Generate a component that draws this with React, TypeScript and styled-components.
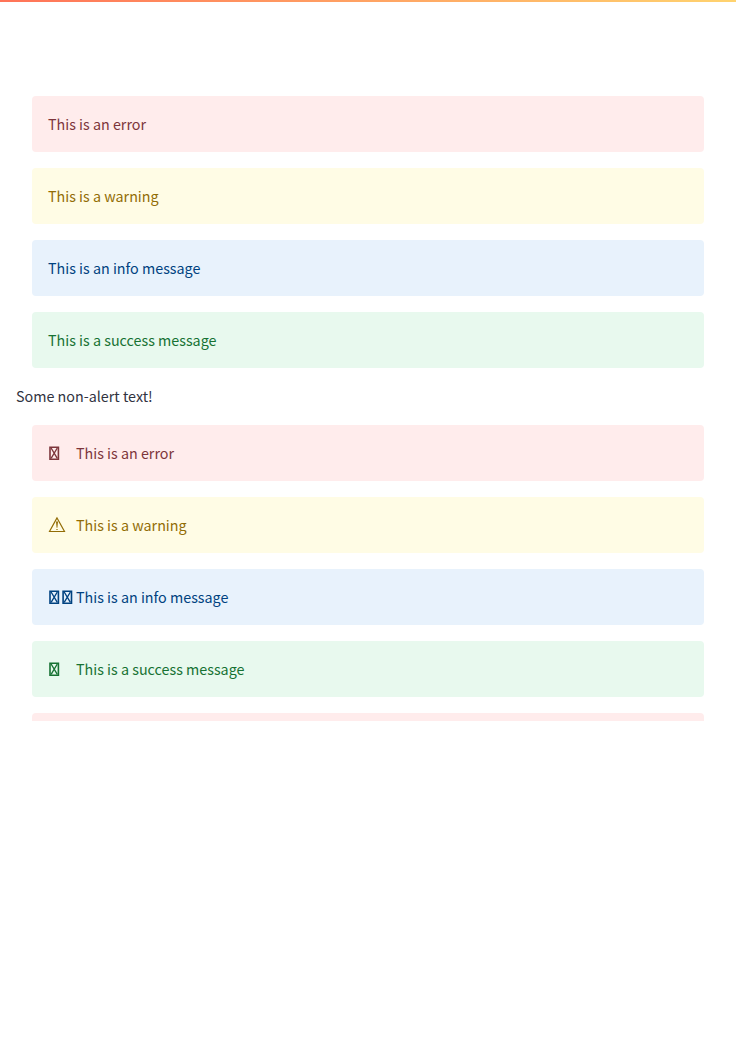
import React from "react";
import styled, { createGlobalStyle } from "styled-components";

const tones = {
  error: { bg: "#ffecec", fg: "#7d353b" },
  warning: { bg: "#fffce5", fg: "#926c05" },
  info: { bg: "#e8f2fc", fg: "#004280" },
  success: { bg: "#e8f9ee", fg: "#177233" },
};
type Tone = keyof typeof tones;

const GlobalStyle = createGlobalStyle`
  * { box-sizing: border-box; }
  body { margin: 0; background: #fff; color: #31333f;
    font-family: "Noto Sans CJK SC", "Noto Sans", sans-serif; font-size: 14.32px; line-height: 24px; }
`;
const Decoration = styled.div`
  height: 2px;
  background: linear-gradient(90deg, #ff7358, #ffd36f);
`;
const Viewport = styled.main`
  height: 719px;
  overflow: hidden;
  padding: 94px 16px 0;
`;
const Stack = styled.section`
  display: flex;
  flex-direction: column;
  gap: 16px;
  padding: 0 16px;
`;
const AlertBox = styled.div<{ $tone: Tone }>`
  display: flex;
  align-items: center;
  height: 56px;
  padding: 0 16px;
  border-radius: 4px;
  background: ${(p) => tones[p.$tone].bg};
  color: ${(p) => tones[p.$tone].fg};
`;
const Icon = styled.svg`
  flex: none;
  width: 28px;
  height: 24px;
  fill: none;
  stroke: currentColor;
`;
const Text = styled.p`
  margin: 16px 0 17px;
`;

const MissingGlyph = ({ x }: { x: number }) => (
  <g transform={`translate(${x} 0)`}>
    <path d="M1.7 6.2h8.4v12H1.7z" strokeWidth="1.6" />
    <path d="M2.8 7l6.2 10.4M9 7L2.8 17.4" strokeWidth="1.35" />
  </g>
);

const AlertIcon = ({ tone }: { tone: Tone }) => (
  <Icon viewBox="0 0 28 24" aria-hidden="true">
    {tone === "warning" ? (
      <>
        <path d="M9 4.9L1.5 18.5h15z" strokeWidth="1.15" />
        <path d="M8 8.6h2l-.6 6.2h-.8zM8.4 15.9h1.2v1.2H8.4z" fill="currentColor" stroke="none" />
      </>
    ) : (
      <MissingGlyph x={0.3} />
    )}
    {tone === "info" && <MissingGlyph x={13.4} />}
  </Icon>
);

const messages: { tone: Tone; text: string }[] = [
  { tone: "error", text: "This is an error" },
  { tone: "warning", text: "This is a warning" },
  { tone: "info", text: "This is an info message" },
  { tone: "success", text: "This is a success message" },
];

export default function App() {
  return (
    <>
      <GlobalStyle />
      <Decoration />
      <Viewport>
        <Stack>
          {messages.map((m) => (
            <AlertBox key={m.tone} $tone={m.tone}>{m.text}</AlertBox>
          ))}
        </Stack>
        <Text>Some non-alert text!</Text>
        <Stack>
          {messages.map((m) => (
            <AlertBox key={m.tone} $tone={m.tone}>
              <AlertIcon tone={m.tone} />
              {m.text}
            </AlertBox>
          ))}
          <AlertBox $tone="error" />
        </Stack>
      </Viewport>
    </>
  );
}
